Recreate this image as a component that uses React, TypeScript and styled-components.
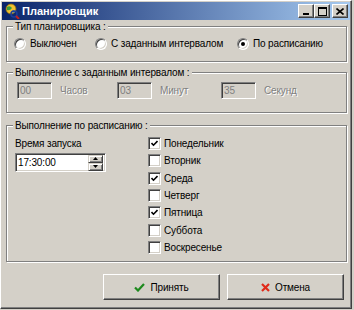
import React from 'react';
import styled, { createGlobalStyle } from 'styled-components';

const face = '#D4D0C8';

const GlobalStyle = createGlobalStyle`
  html, body { margin: 0; padding: 0; background: ${face}; }
  body {
    font-family: "Liberation Sans", Arial, sans-serif;
    font-size: 10px;
    letter-spacing: -0.15px;
    color: #000;
  }
`;

const Window = styled.div`
  width: 352px;
  height: 309px;
  box-sizing: border-box;
  background: ${face};
  border: 1px solid;
  border-color: #fff #404040 #404040 #fff;
  box-shadow: inset -1px -1px 0 #808080;
  padding: 1px;
  display: flex;
  flex-direction: column;
`;

const TitleBar = styled.div`
  height: 18px;
  flex: none;
  display: flex;
  align-items: center;
  padding: 0 2px 0 2px;
  background: linear-gradient(to right, #0a246a, #a6caf0);
  color: #fff;
  font-weight: bold;
  font-size: 11px;
  letter-spacing: 0;
`;

const TitleText = styled.span`
  margin-left: 2px;
  flex: 1;
`;

const CaptionButton = styled.div<{ $gap?: number }>`
  width: 16px;
  height: 14px;
  box-sizing: border-box;
  margin-left: ${p => p.$gap ?? 0}px;
  background: ${face};
  border: 1px solid;
  border-color: #fff #404040 #404040 #fff;
  box-shadow: inset -1px -1px 0 #808080;
  display: flex;
  align-items: center;
  justify-content: center;
`;

const Body = styled.div`
  flex: 1;
  display: flex;
  flex-direction: column;
  padding: 6px 3px 0 4px;
`;

const Group = styled.div<{ $top?: number; $bottom: number }>`
  margin-top: ${p => p.$top ?? 0}px;
  border: 1px solid #808080;
  box-shadow: inset 1px 1px 0 #fff, 1px 1px 0 #fff;
  padding: 0 8px ${p => p.$bottom}px 8px;
`;

const GroupTitle = styled.div`
  width: fit-content;
  margin: -7px 0 0 -2px;
  padding: 0 2px;
  line-height: 13px;
  background: ${face};
`;

const RadioRow = styled.div`
  display: flex;
  margin-top: 4px;
  height: 13px;
  align-items: center;
`;

const RadioItem = styled.label<{ $w?: number }>`
  display: flex;
  align-items: center;
  gap: 4px;
  width: ${p => (p.$w ? `${p.$w}px` : 'auto')};
  margin-left: -1px;
`;

const Radio = styled.span<{ $on?: boolean }>`
  width: 12px;
  height: 12px;
  box-sizing: border-box;
  border-radius: 50%;
  background: #fff;
  border: 1px solid;
  border-color: #808080 #fff #fff #808080;
  box-shadow: inset 1px 1px 0 #404040, inset -1px -1px 0 ${face};
  &::after {
    content: '';
    display: ${p => (p.$on ? 'block' : 'none')};
    width: 4px;
    height: 4px;
    border-radius: 50%;
    background: #000;
    margin: 3px;
  }
`;

const IntervalRow = styled.div`
  display: grid;
  grid-template-columns: 100px 104px auto;
  margin-top: 3px;
  padding-left: 2px;
`;

const Unit = styled.div`
  display: flex;
  align-items: center;
  gap: 8px;
`;

const Sunken = styled.div<{ $disabled?: boolean; $w: number; $h: number }>`
  width: ${p => p.$w}px;
  height: ${p => p.$h}px;
  box-sizing: border-box;
  border: 1px solid;
  border-color: #808080 #fff #fff #808080;
  box-shadow: inset 1px 1px 0 #404040, inset -1px -1px 0 ${face};
  background: ${p => (p.$disabled ? face : '#fff')};
  color: ${p => (p.$disabled ? '#808080' : '#000')};
  display: flex;
  align-items: center;
  padding-left: 2px;
`;

const GrayText = styled.span`
  color: #808080;
  text-shadow: 1px 1px 0 #fff;
`;

const ScheduleGrid = styled.div`
  display: grid;
  grid-template-columns: 133px auto;
  margin-top: 3px;
`;

const LeftCol = styled.div`
  display: flex;
  flex-direction: column;
`;

const FieldLabel = styled.div`
  line-height: 17px;
`;

const TimeBox = styled(Sunken)`
  margin-top: 1px;
  padding-right: 2px;
  justify-content: space-between;
`;

const Spinner = styled.div`
  display: flex;
  flex-direction: column;
  width: 15px;
  height: 16px;
`;

const SpinButton = styled.div`
  flex: 1;
  box-sizing: border-box;
  background: ${face};
  border: 1px solid;
  border-color: ${face} #404040 #404040 ${face};
  box-shadow: inset 1px 1px 0 #fff, inset -1px -1px 0 #808080;
  display: flex;
  align-items: center;
  justify-content: center;
`;

const DayList = styled.div`
  display: flex;
  flex-direction: column;
`;

const DayRow = styled.label`
  height: 17.33px;
  display: flex;
  align-items: center;
  gap: 3px;
`;

const CheckBox = styled.span`
  width: 13px;
  height: 13px;
  box-sizing: border-box;
  background: #fff;
  border: 1px solid;
  border-color: #808080 #fff #fff #808080;
  box-shadow: inset 1px 1px 0 #404040, inset -1px -1px 0 ${face};
  display: flex;
  align-items: center;
  justify-content: center;
`;

const Footer = styled.div`
  display: flex;
  justify-content: flex-end;
  gap: 7px;
  margin-top: 12px;
  padding-right: 3px;
`;

const Button = styled.div`
  width: 117px;
  height: 26px;
  box-sizing: border-box;
  background: ${face};
  border: 1px solid;
  border-color: #fff #404040 #404040 #fff;
  box-shadow: inset -1px -1px 0 #808080;
  display: flex;
  align-items: center;
  justify-content: center;
  gap: 5px;
`;

const AppIcon = () => (
  <svg width="16" height="16" viewBox="0 0 16 16">
    <circle cx="7" cy="6" r="5" fill="#f2c230" stroke="#8a6a10" strokeWidth="0.8" />
    <path d="M3 4 Q6 2 8 5 Q6 8 3 7 Z" fill="#3aa040" />
    <path d="M8 8 Q10 6 11 9 Q9 11 8 8 Z" fill="#2a7fd0" />
    <circle cx="10" cy="11" r="3" fill="none" stroke="#1a3e9a" strokeWidth="1.5" />
    <path d="M12 13 L15 16" stroke="#c02020" strokeWidth="2" />
  </svg>
);

const MinGlyph = () => (
  <svg width="8" height="7" viewBox="0 0 8 7">
    <rect x="1" y="5" width="6" height="2" fill="#000" />
  </svg>
);

const MaxGlyph = () => (
  <svg width="9" height="9" viewBox="0 0 9 9">
    <rect x="0.5" y="0.5" width="8" height="8" fill="none" stroke="#000" />
    <rect x="0" y="0" width="9" height="2" fill="#000" />
  </svg>
);

const CloseGlyph = () => (
  <svg width="8" height="7" viewBox="0 0 8 7">
    <path d="M0.5 0.5 L7.5 6.5 M7.5 0.5 L0.5 6.5" stroke="#000" strokeWidth="1.6" />
  </svg>
);

const Tick = () => (
  <svg width="7" height="7" viewBox="0 0 7 7">
    <polyline points="0.5,3 2.5,5.2 6.5,1" fill="none" stroke="#000" strokeWidth="1.6" />
  </svg>
);

const SpinArrow = ({ up }: { up?: boolean }) => (
  <svg width="5" height="3" viewBox="0 0 5 3">
    <path d={up ? 'M0 3 L2.5 0 L5 3 Z' : 'M0 0 L5 0 L2.5 3 Z'} fill="#000" />
  </svg>
);

const OkIcon = () => (
  <svg width="11" height="9" viewBox="0 0 11 9">
    <path d="M1 4.5 L4 7.5 L10 1" fill="none" stroke="#1e8a1e" strokeWidth="2.2" />
  </svg>
);

const CancelIcon = () => (
  <svg width="9" height="9" viewBox="0 0 9 9">
    <path d="M1 1 L8 8 M8 1 L1 8" stroke="#e02a1a" strokeWidth="2.2" />
  </svg>
);

const days = [
  { name: 'Понедельник', on: true },
  { name: 'Вторник', on: false },
  { name: 'Среда', on: true },
  { name: 'Четверг', on: false },
  { name: 'Пятница', on: true },
  { name: 'Суббота', on: false },
  { name: 'Воскресенье', on: false },
];

const intervals = [
  { value: '00', unit: 'Часов' },
  { value: '03', unit: 'Минут' },
  { value: '35', unit: 'Секунд' },
];

const App = () => (
  <>
    <GlobalStyle />
    <Window>
      <TitleBar>
        <AppIcon />
        <TitleText>Планировщик</TitleText>
        <CaptionButton><MinGlyph /></CaptionButton>
        <CaptionButton><MaxGlyph /></CaptionButton>
        <CaptionButton $gap={2}><CloseGlyph /></CaptionButton>
      </TitleBar>
      <Body>
        <Group $bottom={11}>
          <GroupTitle>Тип планировщика :</GroupTitle>
          <RadioRow>
            <RadioItem $w={82}><Radio />Выключен</RadioItem>
            <RadioItem $w={143}><Radio />С заданным интервалом</RadioItem>
            <RadioItem><Radio $on />По расписанию</RadioItem>
          </RadioRow>
        </Group>
        <Group $top={10} $bottom={13}>
          <GroupTitle>Выполнение с заданным интервалом :</GroupTitle>
          <IntervalRow>
            {intervals.map(i => (
              <Unit key={i.unit}>
                <Sunken $disabled $w={35} $h={17}>{i.value}</Sunken>
                <GrayText>{i.unit}</GrayText>
              </Unit>
            ))}
          </IntervalRow>
        </Group>
        <Group $top={12} $bottom={5}>
          <GroupTitle>Выполнение по расписанию :</GroupTitle>
          <ScheduleGrid>
            <LeftCol>
              <FieldLabel>Время запуска</FieldLabel>
              <TimeBox $w={91} $h={19}>
                17:30:00
                <Spinner>
                  <SpinButton><SpinArrow up /></SpinButton>
                  <SpinButton><SpinArrow /></SpinButton>
                </Spinner>
              </TimeBox>
            </LeftCol>
            <DayList>
              {days.map(d => (
                <DayRow key={d.name}>
                  <CheckBox>{d.on && <Tick />}</CheckBox>
                  {d.name}
                </DayRow>
              ))}
            </DayList>
          </ScheduleGrid>
        </Group>
        <Footer>
          <Button><OkIcon />Принять</Button>
          <Button><CancelIcon />Отмена</Button>
        </Footer>
      </Body>
    </Window>
  </>
);

export default App;
